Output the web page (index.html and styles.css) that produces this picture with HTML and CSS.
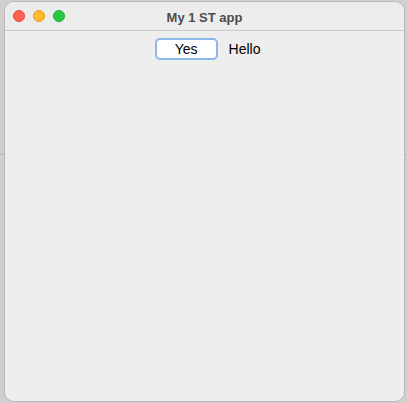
FILE: index.html
```html
<!DOCTYPE html>
<html>
<head>
<meta charset="utf-8">
<link rel="stylesheet" href="styles.css">
</head>
<body>
<div class="desk-line"></div>
<div class="window">
  <div class="titlebar">
    <div class="lights">
      <span class="light red"></span>
      <span class="light yellow"></span>
      <span class="light green"></span>
    </div>
    <div class="title">My 1 ST app</div>
  </div>
  <div class="content">
    <button class="btn">Yes</button>
    <span class="label">Hello</span>
  </div>
</div>
</body>
</html>
```
FILE: styles.css
```css
html, body {
  margin: 0;
  padding: 0;
  width: 407px;
  height: 403px;
  overflow: hidden;
  background: #cfcfcf;
  font-family: "Liberation Sans", Arial, sans-serif;
}
body {
  position: relative;
}
.desk-line {
  position: absolute;
  left: 0;
  right: 0;
  top: 154px;
  height: 1px;
  background: #b4b4b4;
}
.window {
  position: relative;
  margin: 1px 0 0 4px;
  width: 399px;
  height: 399px;
  border: 1px solid #b9b9b9;
  border-radius: 10px;
  background: #eeeeee;
  overflow: hidden;
  display: flex;
  flex-direction: column;
}
.titlebar {
  height: 28px;
  border-bottom: 1px solid #c8c8c8;
  background: #ececec;
  display: flex;
  align-items: center;
  position: relative;
  flex-shrink: 0;
}
.lights {
  display: flex;
  gap: 8px;
  padding-left: 8px;
}
.light {
  width: 12px;
  height: 12px;
  border-radius: 50%;
  box-sizing: border-box;
}
.red { background: #fe5f57; border: 1px solid #e2463f; }
.yellow { background: #febc2e; border: 1px solid #e1a126; }
.green { background: #28c840; border: 1px solid #1daa2c; }
.title {
  position: absolute;
  left: 0;
  right: 0;
  top: 8px;
  text-align: center;
  font-weight: bold;
  font-size: 13px;
  color: #4c4c4c;
}
.content {
  display: flex;
  justify-content: center;
  align-items: center;
  gap: 11px;
  padding: 7px 0 0 6px;
}
.btn {
  width: 63px;
  height: 22px;
  box-sizing: border-box;
  border: 2px solid #8db7ec;
  border-radius: 5px;
  background: #ffffff;
  font-family: "Liberation Sans", Arial, sans-serif;
  font-size: 14px;
  color: #000;
  padding: 0;
  line-height: 17px;
}
.label {
  font-size: 14px;
  color: #000;
}
```
